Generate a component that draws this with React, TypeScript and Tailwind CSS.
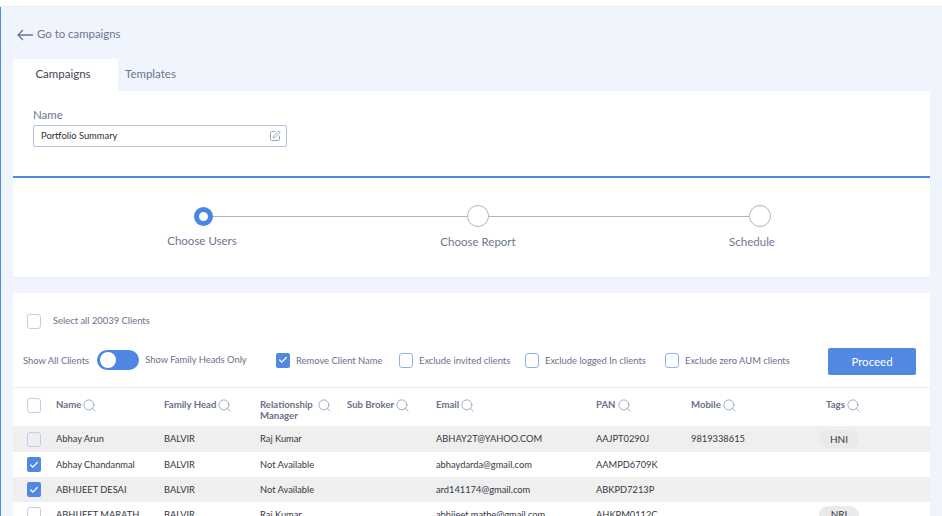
import { Check, Search, SquarePen } from 'lucide-react';

const columns = 'grid grid-cols-[29px_108px_96px_87px_89px_160px_95px_135px_1fr]';

const headers = [
  { label: 'Name' },
  { label: 'Family Head' },
  { label: 'Relationship Manager', wrap: true },
  { label: 'Sub Broker' },
  { label: 'Email' },
  { label: 'PAN' },
  { label: 'Mobile' },
  { label: 'Tags' },
];

const clients = [
  { name: 'Abhay Arun', head: 'BALVIR', rm: 'Raj Kumar', email: 'ABHAY2T@YAHOO.COM', pan: 'AAJPT0290J', mobile: '9819338615', tag: 'HNI', checked: false },
  { name: 'Abhay Chandanmal', head: 'BALVIR', rm: 'Not Available', email: 'abhaydarda@gmail.com', pan: 'AAMPD6709K', mobile: '', tag: '', checked: true },
  { name: 'ABHIJEET DESAI', head: 'BALVIR', rm: 'Not Available', email: 'ard141174@gmail.com', pan: 'ABKPD7213P', mobile: '', tag: '', checked: true },
  { name: 'ABHIJEET MARATH', head: 'BALVIR', rm: 'Raj Kumar', email: 'abhijeet.mathe@gmail.com', pan: 'AHKPM0112C', mobile: '', tag: 'NRI', checked: false },
];

const steps = [
  { label: 'Choose Users', active: true, spacing: 'ml-[190px]', labelShift: 'mr-[2px]' },
  { label: 'Choose Report', active: false, spacing: 'ml-[275px]', labelShift: '' },
  { label: 'Schedule', active: false, spacing: 'ml-[282px]', labelShift: 'mr-[16px]' },
];

function Box({ checked = false, muted = false }: { checked?: boolean; muted?: boolean }) {
  if (checked) {
    return (
      <span className="w-[14px] h-[15px] rounded-[2px] bg-[#5088e2] flex items-center justify-center shrink-0">
        <Check className="w-[10px] h-[10px] text-white" strokeWidth={3} />
      </span>
    );
  }
  return (
    <span
      className={`w-[14px] h-[15px] rounded-[3px] border shrink-0 ${
        muted ? 'border-[#c0cfe9]' : 'border-[#8fb2ea]'
      }`}
    />
  );
}

function Filter({ label }: { label: string }) {
  return (
    <div className="flex items-center gap-[6px]">
      <Box />
      <span className="mt-[1px] text-[9.4px] text-[#6a7189]">{label}</span>
    </div>
  );
}

export default function App() {
  return (
    <div className="h-[516px] w-[942px] overflow-hidden bg-white font-['Lato',sans-serif]">
      <div className="h-[7px] border-b border-[#e6eaf3]" />
      <div className="h-[509px] bg-[#f0f4fc] border-l border-[#4a8ae8] pl-3 pr-3 overflow-hidden">
        {/* Back link */}
        <div className="h-[52px] pt-[19px] flex items-start gap-[4px] pl-[4px] text-[#6d7590]">
          <svg width="16" height="12" viewBox="0 0 16 12" fill="none" stroke="currentColor" strokeWidth="1.3" className="mt-[3px]">
            <path d="M16 6H1M6 1 1 6l5 5" />
          </svg>
          <span className="text-[11.4px] leading-[16px]">Go to campaigns</span>
        </div>

        {/* Tabs */}
        <div className="flex h-[32px]">
          <div className="w-[105px] bg-white rounded-t-[2px] flex items-center justify-center pb-[2px] pr-[5px] text-[11.5px] text-[#3f4556]">
            Campaigns
          </div>
          <div className="pl-[7px] pb-[2px] flex items-center text-[11.5px] text-[#6d7590]">Templates</div>
        </div>

        {/* Name and stepper */}
        <div className="bg-white border-b border-[#e6eaf3] h-[187px] flex flex-col">
          <div className="h-[87px] border-b-2 border-[#4a8ae8] px-5 pt-[17px]">
            <div className="text-[11.5px] leading-[14px] text-[#6d7590] mb-[3px]">Name</div>
            <div className="w-[254px] h-[22px] border border-[#b4c2dc] rounded-[2px] flex items-center justify-between pl-[7px] pr-[5px]">
              <span className="text-[9.4px] text-[#2c2f38]">Portfolio Summary</span>
              <SquarePen className="w-[12px] h-[12px] text-[#9aa3b8]" strokeWidth={2} />
            </div>
          </div>
          <div className="relative flex pt-[27px]">
            <div className="absolute left-[190px] w-[557px] top-[38px] h-px bg-[#b5b5b5]" />
            {steps.map(({ label, active, spacing, labelShift }) => (
              <div key={label} className={`w-0 flex flex-col items-center z-10 ${spacing}`}>
                <span
                  className={
                    active
                      ? 'w-[19px] h-[19px] rounded-full border-[5px] border-[#4a86e4] bg-white shrink-0 mt-[2px]'
                      : 'w-[22px] h-[22px] rounded-full border border-[#b5b5b5] bg-white shrink-0'
                  }
                />
                <span className={`mt-[8px] text-[11.5px] leading-[14px] text-[#6d7590] whitespace-nowrap ${labelShift}`}>{label}</span>
              </div>
            ))}
          </div>
        </div>

        {/* Clients */}
        <div className="mt-[15px] bg-white h-[223px] overflow-hidden">
          <div className="pl-[14px] pt-[22px] flex items-center gap-[12px] h-[35px]">
            <Box muted />
            <span className="text-[9.4px] text-[#6a7189]">Select all 20039 Clients</span>
          </div>
          <div className="h-[60px] border-b border-[#ebedf2] pl-[10px] flex items-center pt-[6px]">
            <div className="flex items-center w-[253px]">
              <span className="mt-[1px] text-[9.4px] text-[#6a7189]">Show All Clients</span>
              <span className="ml-[8px] -mt-[2px] w-[42px] h-[20px] rounded-full bg-[#4f86e2] flex items-center pl-[3px]">
                <span className="w-[16px] h-[16px] rounded-full bg-white" />
              </span>
              <span className="ml-[6px] text-[9.4px] text-[#6a7189]">Show Family Heads Only</span>
            </div>
            <div className="flex items-center gap-[6px] w-[123px]">
              <Box checked />
              <span className="mt-[1px] text-[9.4px] text-[#6a7189]">Remove Client Name</span>
            </div>
            <div className="w-[126px]"><Filter label="Exclude invited clients" /></div>
            <div className="w-[140px]"><Filter label="Exclude logged In clients" /></div>
            <div className="w-[163px]"><Filter label="Exclude zero AUM clients" /></div>
            <button className="w-[88px] h-[27px] mt-[2px] rounded-[2px] bg-[#5088e2] text-white text-[11.5px]">Proceed</button>
          </div>

          {/* Table */}
          <div className={`${columns} h-[38px] items-start pl-[14px] pt-[10px]`}>
            <Box muted />
            {headers.map(({ label, wrap }) => (
              <div key={label} className="flex items-start gap-[1px] text-[9.6px] leading-[11px] font-bold text-[#6a7189]">
                <span className={`mt-[1px] ${wrap ? 'w-[56px]' : 'whitespace-nowrap'}`}>{label}</span>
                <Search className="w-[15px] h-[15px] text-[#8f9bb8] shrink-0" strokeWidth={1.3} />
              </div>
            ))}
          </div>
          {clients.map((c, i) => (
            <div
              key={c.name}
              className={`${columns} items-center pl-[14px] text-[9.3px] text-[#35383f] ${
                i === 0 ? 'h-[26px]' : 'h-[25px]'
              } ${i % 2 === 0 ? 'bg-[#efefef]' : 'bg-white'}`}
            >
              <Box checked={c.checked} muted />
              <span>{c.name}</span>
              <span>{c.head}</span>
              <span>{c.rm}</span>
              <span />
              <span>{c.email}</span>
              <span>{c.pan}</span>
              <span>{c.mobile}</span>
              <span>
                {c.tag && (
                  <span className="-ml-[7px] w-[40px] h-[18px] rounded-full bg-[#eaeaea] flex items-center justify-center text-[10px]">
                    {c.tag}
                  </span>
                )}
              </span>
            </div>
          ))}
        </div>
      </div>
    </div>
  );
}
